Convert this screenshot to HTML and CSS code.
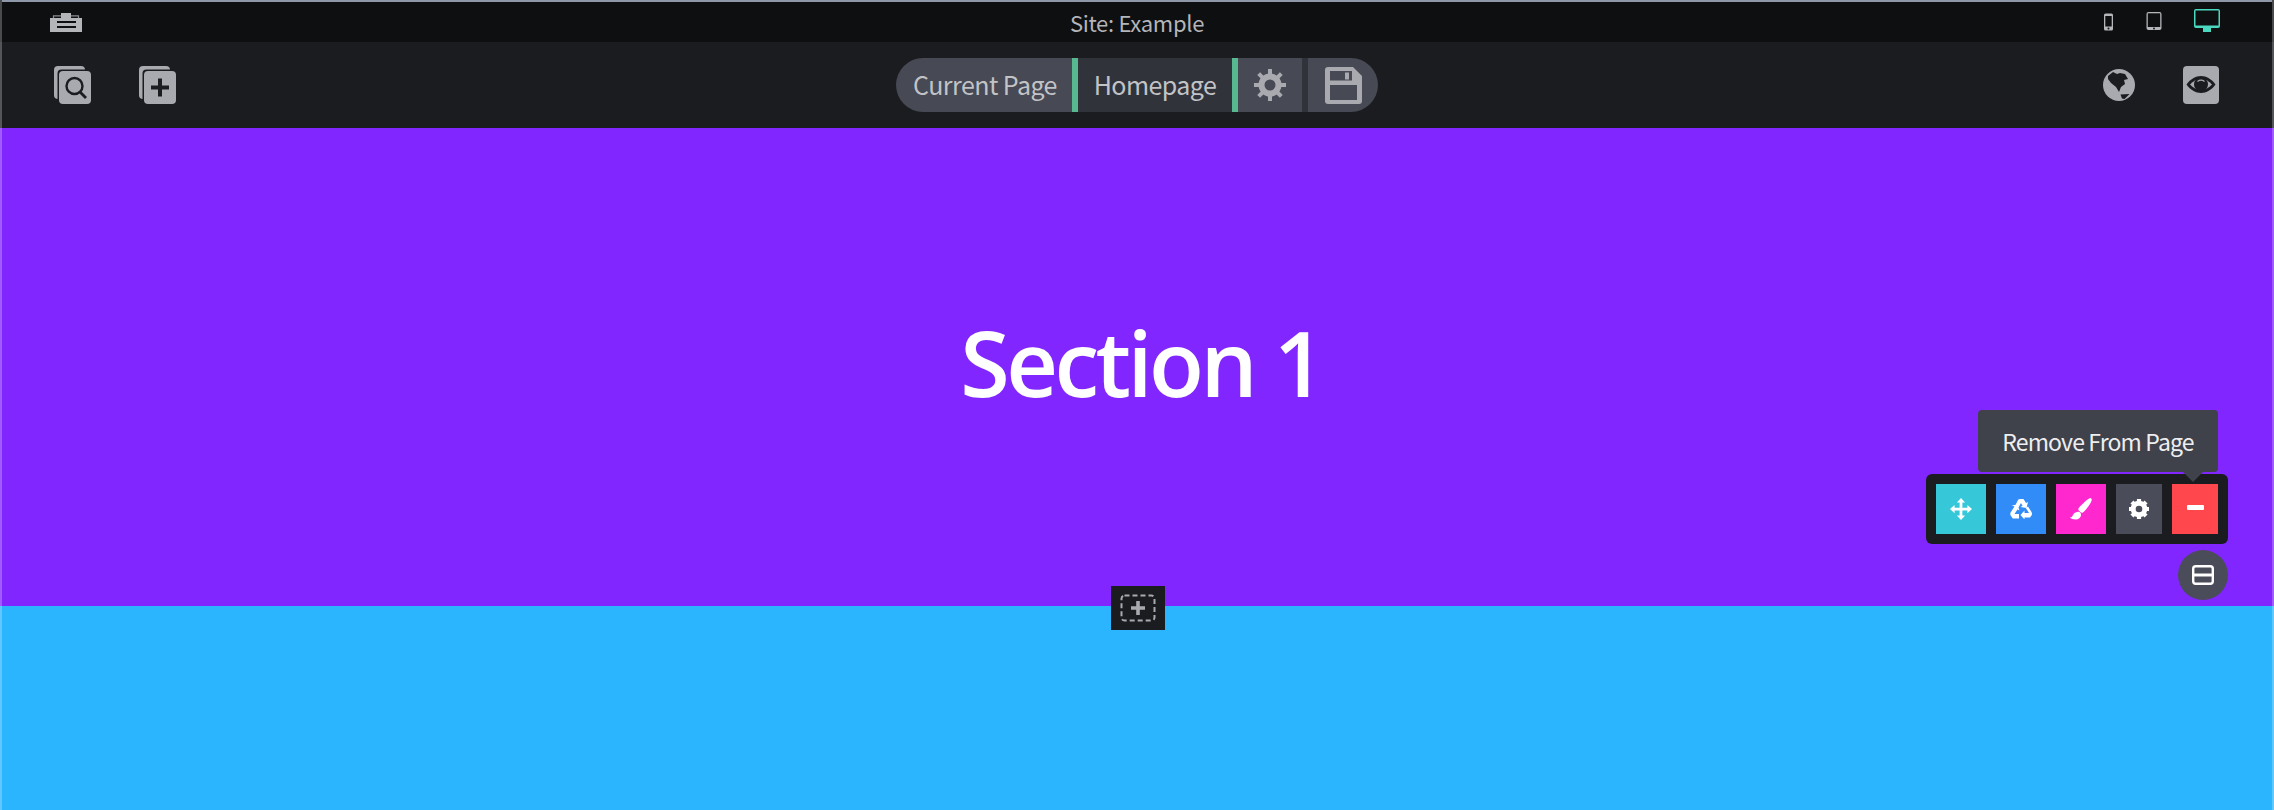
FILE: index.html
```html
<!DOCTYPE html>
<html lang="en">
<head>
<meta charset="utf-8">
<title>Site: Example</title>
<link rel="stylesheet" href="styles.css">
</head>
<body>
<div class="frame">
  <header class="topbar">
    <svg class="ico-briefcase" viewBox="0 0 32 19"><path fill="none" stroke="#8c8d91" stroke-width="1.200" d="M3.500 5.500V2.800h25v2.700"/><path fill="#b4b5b9" d="M0 5h32v14H0zM11 0h10v5H11z"/><path fill="#0e0f11" d="M7 8h19v2H7zM7 13h19v2H7z"/></svg>
    <div class="site-name">Site: Example</div>
    <div class="devices">
      <svg class="ico-phone" viewBox="0 0 10 18"><rect x=".5" y=".5" width="9" height="17" rx="1.500" fill="#b4b5b9"/><rect x="1.800" y="3" width="6.400" height="10.500" fill="#0e0f11"/><circle cx="5" cy="15.600" r="1" fill="#0e0f11"/></svg>
      <svg class="ico-tablet" viewBox="0 0 16 19"><rect x=".5" y=".5" width="15" height="18" rx="2" fill="#b4b5b9"/><rect x="1.800" y="1.800" width="12.400" height="13.700" fill="#0e0f11"/><circle cx="8" cy="17" r=".9" fill="#0e0f11"/></svg>
      <svg class="ico-desktop" viewBox="0 0 26 23"><path fill="#4ad9c0" d="M2 0h22a2 2 0 0 1 2 2v15a2 2 0 0 1-2 2h-7v4H9v-4H2a2 2 0 0 1-2-2V2a2 2 0 0 1 2-2z"/><rect x="1.500" y="1.500" width="23" height="15" fill="#0e0f11"/></svg>
    </div>
  </header>
  <nav class="toolbar">
    <div class="tool-left">
      <svg class="ico-stack" viewBox="0 0 37 38"><rect x="0" y="0" width="31" height="33" rx="4" fill="#a9aaaf"/><rect x="3.500" y="3.500" width="33.500" height="34.500" rx="4" fill="#1b1c20"/><rect x="5" y="5" width="32" height="33" rx="4" fill="#a9aaaf"/><circle cx="20.500" cy="20" r="8" fill="none" stroke="#1b1c20" stroke-width="2.400"/><path d="M26 26l6 6" stroke="#1b1c20" stroke-width="2.800"/></svg>
      <svg class="ico-stack" viewBox="0 0 37 38"><rect x="0" y="0" width="31" height="33" rx="4" fill="#a9aaaf"/><rect x="3.500" y="3.500" width="33.500" height="34.500" rx="4" fill="#1b1c20"/><rect x="5" y="5" width="32" height="33" rx="4" fill="#a9aaaf"/><path d="M12 19.500h18v4H12zM19 12.500h4v18h-4z" fill="#1b1c20"/></svg>
    </div>
    <div class="pill">
      <div class="seg seg-light seg-first">Current Page</div>
      <div class="seg seg-dark seg-home">Homepage</div>
      <div class="seg seg-light seg-gear">
        <svg class="ico-gear" viewBox="0 0 32 32"><g fill="#a9aaaf"><path d="M14 0h4v6h-4zM14 26h4v6h-4zM0 14h6v4H0zM26 14h6v4h-6z"/><path d="M14 0h4v6h-4z" transform="rotate(45 16 16)"/><path d="M14 0h4v6h-4z" transform="rotate(135 16 16)"/><path d="M14 0h4v6h-4z" transform="rotate(225 16 16)"/><path d="M14 0h4v6h-4z" transform="rotate(315 16 16)"/></g><circle cx="16" cy="16" r="8.500" fill="none" stroke="#a9aaaf" stroke-width="6"/></svg>
      </div>
      <div class="seg seg-light seg-save">
        <svg class="ico-save" viewBox="0 0 37 37"><path fill="#a9aaaf" d="M3 0h25l9 9v25a3 3 0 0 1-3 3H3a3 3 0 0 1-3-3V3a3 3 0 0 1 3-3z"/><path fill="#474954" d="M5 4h22v9.500H5zM5 18h27v15H5z"/><rect x="20" y="5.500" width="4" height="7" fill="#a9aaaf"/></svg>
      </div>
    </div>
    <div class="tool-right">
      <svg class="ico-globe" viewBox="0 0 32 32"><circle cx="16" cy="16" r="16" fill="#a9aaaf"/><path fill="#1b1c20" d="M5 7l5-4 4 2 3-1 5 1 3 5-4 1 1 4-4 3-2 5-3-5-5-4-3-4zM17.500 25.500l9-.5-5 5-2.500-.5z"/></svg>
      <svg class="ico-eye" viewBox="0 0 36 38"><rect width="36" height="38" rx="4" fill="#a9aaaf"/><path fill="#1b1c20" d="M3.500 18.500c4-5.500 9-8.500 14.500-8.500s10.500 3 14.500 8.500c-4 5.500-9 8.500-14.500 8.500s-10.500-3-14.500-8.500z"/><path fill="#a9aaaf" d="M7 18.500c3-3.500 7-5.500 11-5.500s8 2 11 5.500c-3 3.500-7 5.500-11 5.500s-8-2-11-5.500z"/><circle cx="18" cy="18.500" r="7" fill="#1b1c20"/><path d="M14.500 15.500c2-1.500 5-1.500 7 0" stroke="#a9aaaf" stroke-width="1.300" fill="none"/></svg>
    </div>
  </nav>
  <main class="canvas">
    <section class="section section-purple"><h1 class="section-title">Section 1</h1></section>
    <section class="section section-blue"></section>

    <button class="add-section" type="button" aria-label="Add section">
      <svg viewBox="0 0 36 28"><rect x="1.500" y="1.500" width="33" height="25" rx="3" fill="none" stroke="#a9aaaf" stroke-width="2" stroke-dasharray="5 3"/><path d="M11 12.200h14v3.600H11zM16.200 7h3.600v14h-3.600z" fill="#a9aaaf"/></svg>
    </button>

    <div class="tooltip">Remove From Page</div>
    <div class="section-tools">
      <div class="tool-btn tool-move">
        <svg viewBox="0 0 24 24" fill="#fff"><path d="M12 0L16.500 5H13.500V10.500H19V7.500L24 12L19 16.500V13.500H13.500V19H16.500L12 24L7.500 19H10.500V13.500H5V16.500L0 12L5 7.500V10.500H10.500V5H7.500Z"/></svg>
      </div>
      <div class="tool-btn tool-recycle">
        <svg class="ico-recycle" viewBox="0 0 22 20" fill="#fff"><path d="M5.500 6L8 1Q8.600 0 10 0H13.500L16 4L18 3L16.500 9L10.500 8L12.500 6.800L11 4L8.500 8.500Z"/><path d="M18 7.500L21.500 13Q22.500 15 21.500 16.500L20 18.500H14.500V20.500L10.500 16L14.500 11.500V14H19L15.800 9Z"/><path d="M4.500 7.500L.6 13.500Q-.2 15.500 1 17L2.800 19.500H9V15H4.500L7.500 10.500L9.500 11.500L7.500 5.500L1.800 6.500Z"/></svg>
      </div>
      <div class="tool-btn tool-brush">
        <svg viewBox="0 0 24 24" fill="#fff"><path d="M22 0c1.500 0 2 1.500 1.500 3-1 3-5 9-9 12.500-1 .9-2.200.8-3.200-.2l-1.500-1.500c-1-1-1-2.300 0-3.300C13 7 19 1 22 0z"/><path d="M8.500 15c2-.3 3.500 1.200 3.500 3.200 0 3-2.800 5.300-6 5.300-2.500 0-5-1-6-2.500 1.500 0 2.500-.5 3-2 .7-2.200 3-3.700 5.500-4z"/></svg>
      </div>
      <div class="tool-btn tool-settings">
        <svg viewBox="0 0 24 24"><g fill="#fff"><path d="M9.500 0h5v5h-5zM9.500 19h5v5h-5zM0 9.500h5v5H0zM19 9.500h5v5h-5z"/><path d="M9.500 0h5v5h-5z" transform="rotate(45 12 12)"/><path d="M9.500 0h5v5h-5z" transform="rotate(135 12 12)"/><path d="M9.500 0h5v5h-5z" transform="rotate(225 12 12)"/><path d="M9.500 0h5v5h-5z" transform="rotate(315 12 12)"/></g><circle cx="12" cy="12" r="7" fill="none" stroke="#fff" stroke-width="6"/></svg>
      </div>
      <div class="tool-btn tool-remove"><span class="minus"></span></div>
    </div>
    <div class="layout-toggle">
      <svg viewBox="0 0 22 20"><rect x="1.200" y="1.200" width="19.600" height="17.600" rx="2.500" fill="none" stroke="#fff" stroke-width="2.400"/><path d="M1 8.500h20v3H1z" fill="#fff"/></svg>
    </div>
  </main>
</div>
</body>
</html>
```

FILE: styles.css
```css
* { box-sizing: border-box; }
html, body { margin: 0; padding: 0; height: 100%; overflow: hidden; }
body { font-family: "Noto Sans CJK JP", "Noto Sans", sans-serif; background: #2bb5ff; }
.frame { width: 2274px; height: 810px; display: flex; flex-direction: column; position: relative; }
.frame::after { content: ""; position: absolute; inset: 0; pointer-events: none; box-shadow: inset 0 2px 0 #8e98a8; border-left: 2px solid rgba(255,255,255,.25); border-right: 2px solid rgba(255,255,255,.25); }

.topbar { height: 42px; background: #0e0f11; position: relative; display: flex; align-items: center; justify-content: center; padding-top: 2px; flex: none; }
.site-name { color: #b4b5b9; font-size: 22px; line-height: 1; letter-spacing: -.3px; }
.ico-briefcase { position: absolute; left: 50px; top: 13px; width: 32px; height: 19px; }
.devices { position: absolute; right: 0; top: 0; height: 42px; }
.ico-phone { position: absolute; right: 160px; top: 13px; width: 11px; height: 18px; }
.ico-tablet { position: absolute; right: 112px; top: 11px; width: 16px; height: 20px; }
.ico-desktop { position: absolute; right: 54px; top: 9px; width: 26px; height: 23px; }

.toolbar { height: 86px; background: #1b1c20; display: flex; align-items: center; justify-content: space-between; position: relative; flex: none; padding: 0 55px 0 54px; }
.tool-left { display: flex; gap: 48px; }
.ico-stack { width: 37px; height: 38px; display: block; }
.tool-right { display: flex; gap: 48px; align-items: center; }
.ico-globe { width: 32px; height: 32px; display: block; }
.ico-eye { width: 36px; height: 38px; display: block; }

.pill { position: absolute; left: 896px; top: 16px; height: 54px; display: flex; border-radius: 27px; overflow: hidden; }
.seg { height: 54px; display: flex; align-items: center; justify-content: center; color: #c2c3c7; font-size: 25px; line-height: 1; letter-spacing: -.55px; padding-bottom: 2px; }
.seg-light { background: #474954; }
.seg-dark { background: #31333b; }
.seg-first { width: 182px; border-right: 6px solid #58b990; padding-left: 2px; }
.seg-home { width: 160px; border-right: 6px solid #58b990; }
.seg-gear { width: 64px; padding-bottom: 0; }
.seg-save { width: 76px; border-left: 6px solid #31333b; padding-bottom: 0; }
.ico-gear { width: 32px; height: 32px; }
.ico-save { width: 37px; height: 37px; }

.canvas { flex: 1; display: flex; flex-direction: column; position: relative; }
.section-purple { height: 478px; background: #8226ff; display: flex; align-items: center; justify-content: center; flex: none; padding: 0 0 10px 8px; }
.section-blue { flex: 1; background: #2bb5ff; }
.section-title { margin: 0; color: #fff; font-family: "Open Sans", "Noto Sans", sans-serif; font-size: 90px; font-weight: 600; line-height: 1; letter-spacing: -3.6px; }

.add-section { position: absolute; left: 1111px; top: 458px; width: 54px; height: 44px; background: #1b1c20; border: 0; padding: 0; display: flex; align-items: center; justify-content: center; }
.add-section svg { width: 36px; height: 28px; }

.tooltip { position: absolute; left: 1978px; top: 282px; width: 240px; height: 62px; background: #3f414b; color: #eeeef0; border-radius: 4px; font-size: 23px; letter-spacing: -.85px; display: flex; align-items: center; justify-content: center; z-index: 2; }
.tooltip::after { content: ""; position: absolute; left: 205px; top: 62px; border: 10px solid transparent; border-top-color: #3f414b; border-bottom: 0; }
.section-tools { position: absolute; left: 1926px; top: 346px; width: 302px; height: 70px; background: #1b1c20; border-radius: 6px; display: flex; gap: 10px; padding: 10px; }
.tool-btn { width: 50px; height: 50px; display: flex; align-items: center; justify-content: center; }
.tool-btn svg { width: 22px; height: 22px; }
.tool-btn svg.ico-recycle { width: 22px; height: 20px; }
.tool-move { background: #36c8d9; }
.tool-recycle { background: #318cf7; }
.tool-brush { background: #ff28cf; }
.tool-settings { background: #4a4c59; width: 46px; }
.tool-btn.tool-settings svg { width: 20px; height: 20px; }
.tool-remove { background: #ff474d; width: 46px; }
.minus { width: 17px; height: 5px; border-radius: 1px; background: #fff; margin-bottom: 4px; }
.layout-toggle { position: absolute; left: 2178px; top: 422px; width: 50px; height: 50px; border-radius: 50%; background: #4a4c59; display: flex; align-items: center; justify-content: center; }
.layout-toggle svg { width: 22px; height: 20px; }
```
